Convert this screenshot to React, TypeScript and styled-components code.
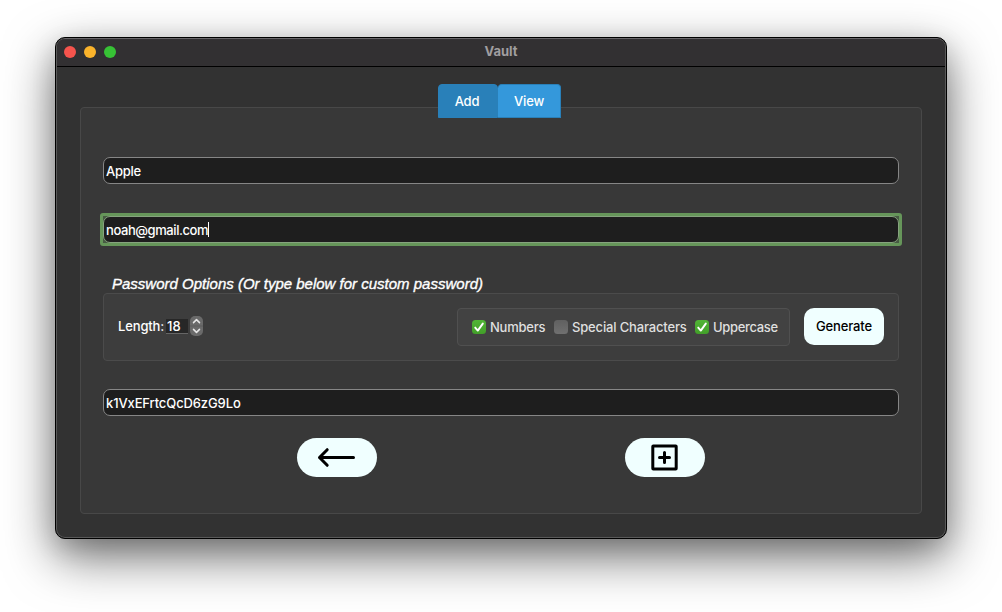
import React from "react";
import styled, { createGlobalStyle } from "styled-components";

const GlobalStyle = createGlobalStyle`
  * { box-sizing: border-box; }
  html, body { margin: 0; background: #ffffff; }
  body {
    font-family: Inter, "Liberation Sans", sans-serif;
    font-size: 13px;
    line-height: 16px;
    color: #ffffff;
    overflow: hidden;
  }
  button, input { font: inherit; }
`;

const Desktop = styled.div`
  width: 1002px;
  height: 612px;
  padding: 37px 55px;
  overflow: hidden;
`;

const Window = styled.main`
  display: flex;
  flex-direction: column;
  width: 892px;
  height: 502px;
  border: 1px solid #000000;
  border-radius: 10px;
  overflow: hidden;
  background: #323232;
  box-shadow: 0 18px 50px rgba(0, 0, 0, 0.56), 0 8px 24px rgba(0, 0, 0, 0.14);
`;

const Frame = styled.div`
  display: flex;
  flex-direction: column;
  flex: 1;
  border: 1px solid #595959;
  border-top-color: #686669;
  border-radius: 9px;
  overflow: hidden;
`;

const TitleBar = styled.header`
  display: grid;
  grid-template-columns: 1fr auto 1fr;
  align-items: center;
  height: 28px;
  padding: 0 7px 2px;
  background: #323032;
  border-bottom: 1px solid #000000;
`;

const Lights = styled.div`
  display: flex;
  gap: 8px;
`;

const Light = styled.span<{ $color: string }>`
  width: 12px;
  height: 12px;
  border-radius: 50%;
  background: ${(p) => p.$color};
`;

const Title = styled.h1`
  margin: 0;
  padding-bottom: 2px;
  font-size: 13px;
  font-weight: 700;
  line-height: 16px;
  letter-spacing: 0;
  color: #a09ea0;
`;

const Body = styled.div`
  display: flex;
  flex-direction: column;
  flex: 1;
  padding: 17px 23px 23px;
`;

const Tabs = styled.nav`
  display: flex;
  align-self: center;
  z-index: 1;
  height: 34px;
  margin: 0 3px -11px 0;
`;

const Tab = styled.button<{ $active?: boolean; $width: number }>`
  width: ${(p) => p.$width}px;
  padding: 0 ${(p) => (p.$active ? 2 : 0)}px 0 0;
  border: 1px solid #2980b9;
  border-left-width: ${(p) => (p.$active ? 1 : 0)}px;
  border-radius: 4px 4px 0 0;
  background: ${(p) => (p.$active ? "#2980b9" : "#3498db")};
  color: #ffffff;
  font-weight: 500;
  letter-spacing: -0.15px;
`;

const Panel = styled.section`
  display: flex;
  flex-direction: column;
  height: 407px;
  padding: 49px 22px 0;
  border: 1px solid #484848;
  border-radius: 4px;
  background: #383838;
`;

const Field = styled.div<{ $focused?: boolean; $spacing?: number }>`
  display: flex;
  align-items: center;
  flex: none;
  height: 27px;
  margin-top: ${(p) => p.$spacing ?? 0}px;
  padding: 0 2px;
  border: 1px solid ${(p) => (p.$focused ? "#86a37e" : "#868686")};
  border-radius: 7px;
  background: #1e1e1e;
  font-weight: 500;
`;

const FocusRing = styled.div`
  flex: none;
  margin: 29px -3px 0;
  border: 3px solid #66965a;
  border-radius: 3px;
  background: #475a43;
`;

const Value = styled.span<{ $track?: number }>`
  letter-spacing: ${(p) => p.$track ?? 0}px;
`;

const Caret = styled.span`
  width: 1px;
  height: 15px;
  background: #ffffff;
`;

const OptionsTitle = styled.h2`
  margin: 29px 0 0 9px;
  height: 18px;
  font-family: "Liberation Sans", Arial, sans-serif;
  font-size: 15px;
  font-style: italic;
  font-weight: 400;
  line-height: 18px;
  white-space: nowrap;
  -webkit-text-stroke: 0.35px #ffffff;
`;

const Options = styled.div`
  display: flex;
  align-items: flex-start;
  flex: none;
  height: 68px;
  padding: 14px;
  border: 1px solid #4b4b4b;
  border-radius: 4px;
  background: #3d3d3d;
`;

const Length = styled.label`
  display: flex;
  align-items: center;
  height: 20px;
  margin: 8px auto 0 0;
  font-weight: 500;
`;

const LengthValue = styled.span`
  width: 22px;
  height: 15px;
  margin: 0 2px 0 2px;
  padding-left: 1px;
  line-height: 15px;
  border-bottom: 1px solid #666666;
  background: #272727;
`;

const Stepper = styled.svg`
  width: 13px;
  height: 20px;
`;

const Checks = styled.div`
  display: flex;
  align-items: center;
  width: 333px;
  height: 38px;
  padding: 0 0 0 14px;
  border: 1px solid #505050;
  border-radius: 4px;
  background: #424242;
`;

const CheckItem = styled.label<{ $width: number }>`
  display: flex;
  align-items: center;
  gap: 4px;
  width: ${(p) => p.$width}px;
  font-weight: 500;
  color: #dfdfdf;
  white-space: nowrap;
`;

const Box = styled.span<{ $on?: boolean }>`
  display: flex;
  width: 14px;
  height: 14px;
  flex: none;
  border-radius: 3.5px;
  background: ${(p) =>
    p.$on
      ? "linear-gradient(#51b436, #429f29)"
      : "linear-gradient(#606060, #707070)"};
`;

const Generate = styled.button`
  width: 80px;
  height: 37px;
  margin-left: 14px;
  padding: 0 0 1px;
  border: 0;
  border-radius: 10px;
  background: #f0ffff;
  color: #000000;
  font-weight: 500;
  letter-spacing: -0.15px;
`;

const Actions = styled.div`
  display: flex;
  gap: 248px;
  margin: 22px 0 0 194px;
`;

const Action = styled.button`
  display: flex;
  align-items: center;
  justify-content: center;
  width: 80px;
  height: 39px;
  padding: 0 2px 1px 0;
  border: 0;
  border-radius: 20px;
  background: #f0ffff;
  color: #000000;
`;

function Check({ label, on, width, track = 0 }: { label: string; on?: boolean; width: number; track?: number }) {
  return (
    <CheckItem $width={width}>
      <Box $on={on}>
        {on && (
          <svg width="14" height="14" viewBox="0 0 14 14" fill="none">
            <path d="M3.2 7.6 L5.8 10.6 L10.8 3.6" stroke="#fff" strokeWidth="1.9" strokeLinecap="round" strokeLinejoin="round" />
          </svg>
        )}
      </Box>
      <Value $track={track}>{label}</Value>
    </CheckItem>
  );
}

export default function App() {
  return (
    <Desktop>
      <GlobalStyle />
      <Window>
        <Frame>
          <TitleBar>
            <Lights>
              <Light $color="#f6544d" />
              <Light $color="#fbb32b" />
              <Light $color="#37c235" />
            </Lights>
            <Title>Vault</Title>
          </TitleBar>
          <Body>
            <Tabs>
              <Tab $active $width={60}>Add</Tab>
              <Tab $width={63}>View</Tab>
            </Tabs>
            <Panel>
              <Field>
                <Value $track={-0.25}>Apple</Value>
              </Field>
              <FocusRing>
                <Field $focused>
                  <Value $track={-0.43}>noah@gmail.com</Value>
                  <Caret />
                </Field>
              </FocusRing>
              <OptionsTitle>Password Options (Or type below for custom password)</OptionsTitle>
              <Options>
                <Length>
                  <Value $track={-0.14}>Length:</Value>
                  <LengthValue>18</LengthValue>
                  <Stepper viewBox="0 0 13 20" fill="none">
                    <rect width="13" height="20" rx="5" fill="#6a6a6a" />
                    <path d="M0 10h13" stroke="#5c5c5c" />
                    <path d="M3.5 6.6 L6.5 3.6 L9.5 6.6 M3.5 13.4 L6.5 16.4 L9.5 13.4" stroke="#e6e6e6" strokeWidth="1.5" strokeLinecap="round" strokeLinejoin="round" />
                  </Stepper>
                </Length>
                <Checks>
                  <Check label="Numbers" on width={82} track={-0.24} />
                  <Check label="Special Characters" width={141} track={-0.16} />
                  <Check label="Uppercase" on width={90} track={-0.33} />
                </Checks>
                <Generate>Generate</Generate>
              </Options>
              <Field $spacing={28}>
                <Value $track={-0.12}>k1VxEFrtcQcD6zG9Lo</Value>
              </Field>
              <Actions>
                <Action aria-label="Back">
                  <svg width="40" height="22" viewBox="0 0 40 22" fill="none" stroke="currentColor" strokeWidth="3" strokeLinecap="round" strokeLinejoin="round">
                    <path d="M37.5 11.5 H3.5 M11.2 3.7 L3.5 11.5 L11.2 19.3" />
                  </svg>
                </Action>
                <Action aria-label="Add">
                  <svg width="28" height="28" viewBox="0 0 28 28" fill="none" stroke="currentColor" strokeWidth="3" strokeLinecap="round" strokeLinejoin="round">
                    <rect x="2.8" y="3" width="23.4" height="23" rx="0.5" />
                    <path d="M14.5 9.5 V19.5 M9.5 14.5 H19.5" />
                  </svg>
                </Action>
              </Actions>
            </Panel>
          </Body>
        </Frame>
      </Window>
    </Desktop>
  );
}
